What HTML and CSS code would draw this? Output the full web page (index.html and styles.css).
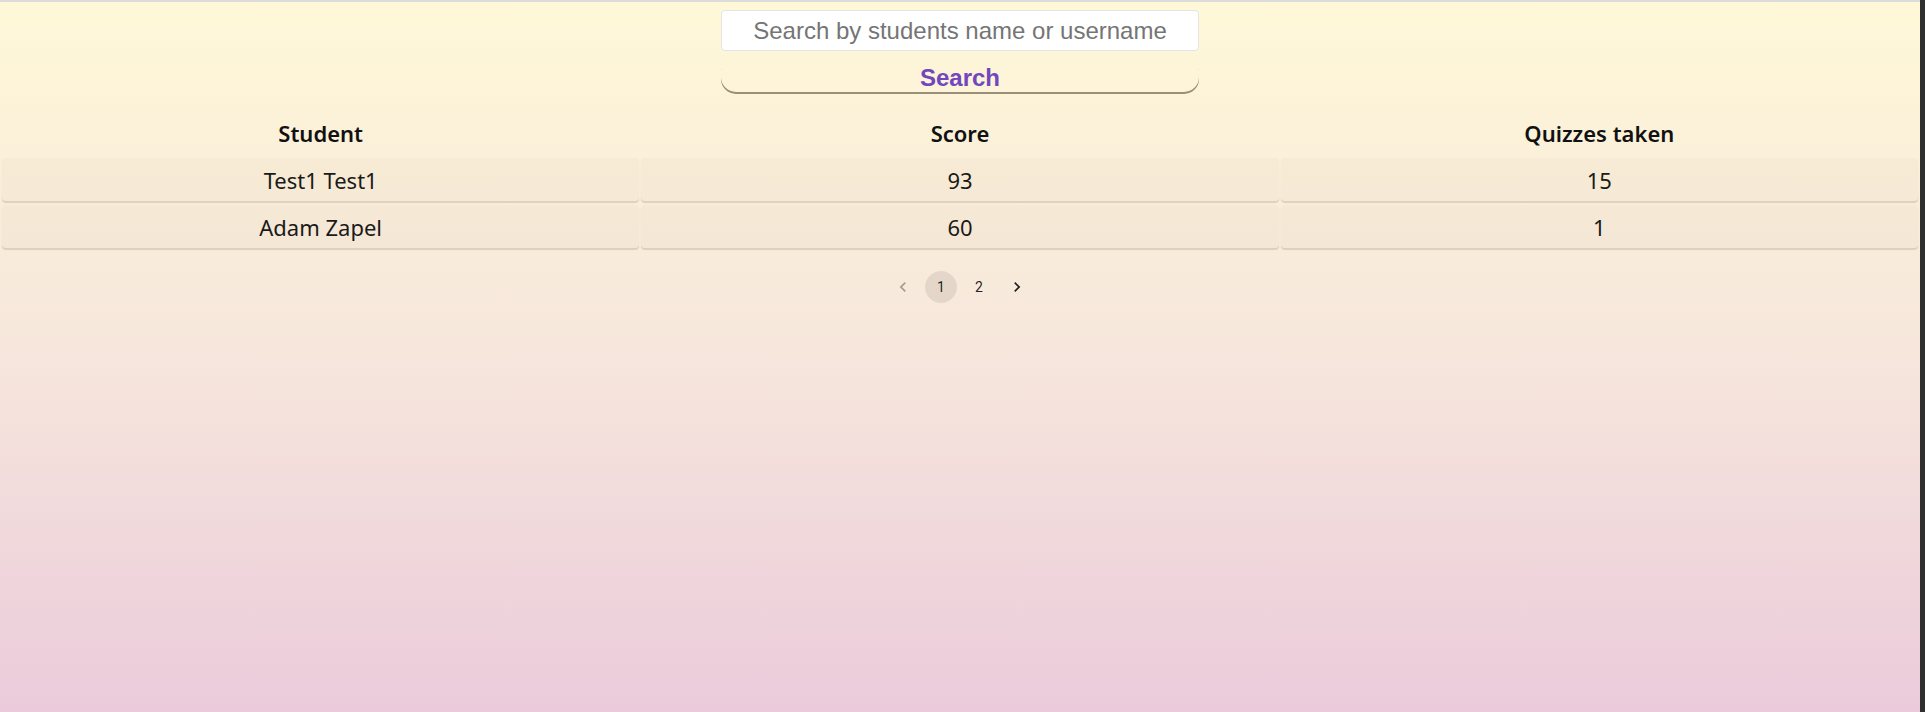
FILE: index.html
```html
<!DOCTYPE html>
<html lang="en">
<head>
<meta charset="utf-8">
<title>Students</title>
<link rel="stylesheet" href="styles.css">
</head>
<body>
<div class="page">
  <main class="main">
    <form class="search-form">
      <input class="search-input" type="text" placeholder="Search by students name or username">
      <button class="search-button" type="button">Search</button>
    </form>
    <table class="scores">
      <thead>
        <tr>
          <th>Student</th>
          <th>Score</th>
          <th>Quizzes taken</th>
        </tr>
      </thead>
      <tbody>
        <tr>
          <td>Test1 Test1</td>
          <td>93</td>
          <td>15</td>
        </tr>
        <tr>
          <td>Adam Zapel</td>
          <td>60</td>
          <td>1</td>
        </tr>
      </tbody>
    </table>
    <nav class="pagination">
      <ul class="pages">
        <li><button class="page-btn disabled" type="button" aria-label="previous page"><svg viewBox="0 0 24 24" class="chev"><path d="M15.41 7.41 14 6l-6 6 6 6 1.41-1.41L10.83 12z"/></svg></button></li>
        <li><button class="page-btn selected" type="button">1</button></li>
        <li><button class="page-btn" type="button">2</button></li>
        <li><button class="page-btn" type="button" aria-label="next page"><svg viewBox="0 0 24 24" class="chev"><path d="M10 6 8.59 7.41 13.17 12l-4.58 4.59L10 18l6-6z"/></svg></button></li>
      </ul>
    </nav>
  </main>
  <div class="scroll-edge"></div>
</div>
</body>
</html>
```
FILE: styles.css
```css
html, body {
  margin: 0;
  padding: 0;
  height: 100%;
}

body {
  font-family: "Noto Sans", "Open Sans", sans-serif;
  color: #111;
}

.page {
  display: flex;
  height: 100vh;
}

.main {
  flex: 1;
  min-width: 0;
  box-sizing: border-box;
  border-top: 2px solid #dcdcdc;
  background: linear-gradient(180deg, #fff8d8 0%, #f6e6dc 50%, #ebcbdb 100%);
  display: flex;
  flex-direction: column;
}

.scroll-edge {
  width: 5px;
  background: #2f2f2f;
}

.search-form {
  width: 478px;
  margin: 8px auto 0;
  display: flex;
  flex-direction: column;
}

.search-input {
  box-sizing: border-box;
  height: 41px;
  width: 100%;
  border: 1px solid #e4e4e4;
  border-radius: 4px;
  background: #fff;
  font-family: "Liberation Sans", Arial, sans-serif;
  font-size: 24px;
  text-align: center;
  color: #333;
  padding: 0 8px;
  outline: none;
}

.search-input::placeholder {
  color: #757575;
}

.search-button {
  box-sizing: border-box;
  margin-top: 5px;
  height: 36px;
  width: 100%;
  padding: 7px 0 0;
  border: none;
  border-radius: 15px;
  background: transparent;
  box-shadow: 0 2px 0 rgba(70, 60, 40, 0.55);
  font-family: "Liberation Sans", Arial, sans-serif;
  font-weight: bold;
  font-size: 24px;
  line-height: 26px;
  color: #7146be;
  cursor: pointer;
}

.scores {
  width: 100%;
  margin-top: 16px;
  border-collapse: separate;
  border-spacing: 2px 4px;
  table-layout: fixed;
}

.scores th {
  height: 42px;
  padding: 0;
  font-size: 22px;
  font-weight: 600;
  text-align: center;
  color: #111;
}

.scores td {
  height: 43px;
  padding: 0;
  font-size: 22px;
  text-align: center;
  color: #1a1a1a;
  background: rgba(120, 90, 60, 0.03);
  border-radius: 4px;
  box-shadow: 0 2px 1px rgba(100, 80, 60, 0.18);
}

.pagination {
  display: flex;
  justify-content: center;
  margin-top: 19px;
}

.pages {
  list-style: none;
  margin: 0;
  padding: 0;
  display: flex;
  align-items: center;
}

.page-btn {
  box-sizing: border-box;
  min-width: 32px;
  height: 32px;
  margin: 0 3px;
  padding: 0 6px;
  border: none;
  border-radius: 16px;
  background: transparent;
  font-family: Roboto, "Liberation Sans", sans-serif;
  font-size: 14px;
  color: rgba(0, 0, 0, 0.87);
  display: flex;
  align-items: center;
  justify-content: center;
  cursor: pointer;
}

.page-btn.selected {
  background: rgba(0, 0, 0, 0.08);
}

.page-btn.disabled {
  opacity: 0.38;
  cursor: default;
}

.chev {
  width: 20px;
  height: 20px;
  fill: currentColor;
}
```
